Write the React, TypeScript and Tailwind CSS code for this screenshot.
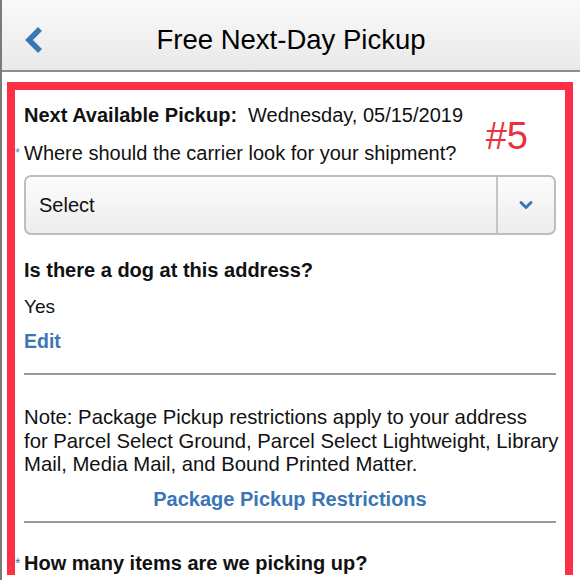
import { ChevronDown } from "lucide-react";

const font = { fontFamily: '"Liberation Sans", Arial, sans-serif' };

function Rule() {
  return <div className="h-[2px] bg-[#9a9a9a]" />;
}

export default function App() {
  return (
    <div
      className="w-[580px] h-[580px] overflow-hidden bg-white border-l-2 border-[#7a7a7a] text-[#111]"
      style={font}
    >
      {/* Top bar */}
      <div className="relative h-[72px] flex items-center justify-center pt-[10px] bg-gradient-to-b from-[#f9f9f9] to-[#e9e9e9] border-b-2 border-[#8e8e8e]">
        <svg
          className="absolute left-[21px] top-[26px]"
          width="22"
          height="28"
          viewBox="0 0 22 28"
        >
          <path d="M17 3 L6 14 L17 25" fill="none" stroke="#3a76b5" strokeWidth="5.5" strokeLinejoin="miter" />
        </svg>
        <h1 className="text-[27.5px] leading-[32px] text-black">Free Next-Day Pickup</h1>
      </div>

      {/* Highlighted form card */}
      <div className="ml-[5px] mr-[7px] mt-[10px] border-[8px] border-b-0 border-[#fb3047] pt-[13px] px-[9px]">
        <div className="relative">
          <div className="flex items-baseline text-[20px] leading-[24px]">
            <span className="font-bold">Next Available Pickup:</span>
            <span className="ml-[11px]">Wednesday, 05/15/2019</span>
          </div>
          <span className="absolute right-[28px] top-[13px] text-[38px] leading-[40px] text-[#e8323f]">#5</span>

          <div className="relative mt-[14px] text-[20px] leading-[24px]">
            <span className="absolute -left-[9px] top-[0px] text-[13px] text-[#6b8cc0]">*</span>
            Where should the carrier look for your shipment?
          </div>

          <div className="mt-[10px] h-[60px] flex rounded-[7px] border-2 border-[#bdbdbd] bg-gradient-to-b from-[#fcfcfc] to-[#ececec]">
            <div className="flex-1 flex items-center pl-[13px] text-[20px]">Select</div>
            <div className="w-[58px] flex items-center justify-center border-l-2 border-[#c4c4c4]">
              <ChevronDown size={20} strokeWidth={3.5} color="#3a76b5" />
            </div>
          </div>

          <div className="mt-[23px] text-[20px] leading-[24px] font-bold">Is there a dog at this address?</div>
          <div className="mt-[13px] text-[19px] leading-[24px]">Yes</div>
          <div className="mt-[10px] text-[19.5px] leading-[24px] font-bold text-[#3a76b5]">Edit</div>

          <div className="mt-[20px]">
            <Rule />
          </div>

          <p className="mt-[31px] text-[20.3px] leading-[23.5px] whitespace-nowrap">
            Note: Package Pickup restrictions apply to your address
            <br />
            for Parcel Select Ground, Parcel Select Lightweight, Library
            <br />
            Mail, Media Mail, and Bound Printed Matter.
          </p>
          <div className="mt-[10px] text-center text-[20px] leading-[24px] font-bold text-[#3a76b5]">
            Package Pickup Restrictions
          </div>

          <div className="mt-[10px]">
            <Rule />
          </div>

          <div className="relative mt-[28px] text-[20px] leading-[24px] font-bold">
            <span className="absolute -left-[9px] top-[0px] text-[14px] font-normal text-[#3a76b5]">*</span>
            How many items are we picking up?
          </div>
        </div>
      </div>
    </div>
  );
}
